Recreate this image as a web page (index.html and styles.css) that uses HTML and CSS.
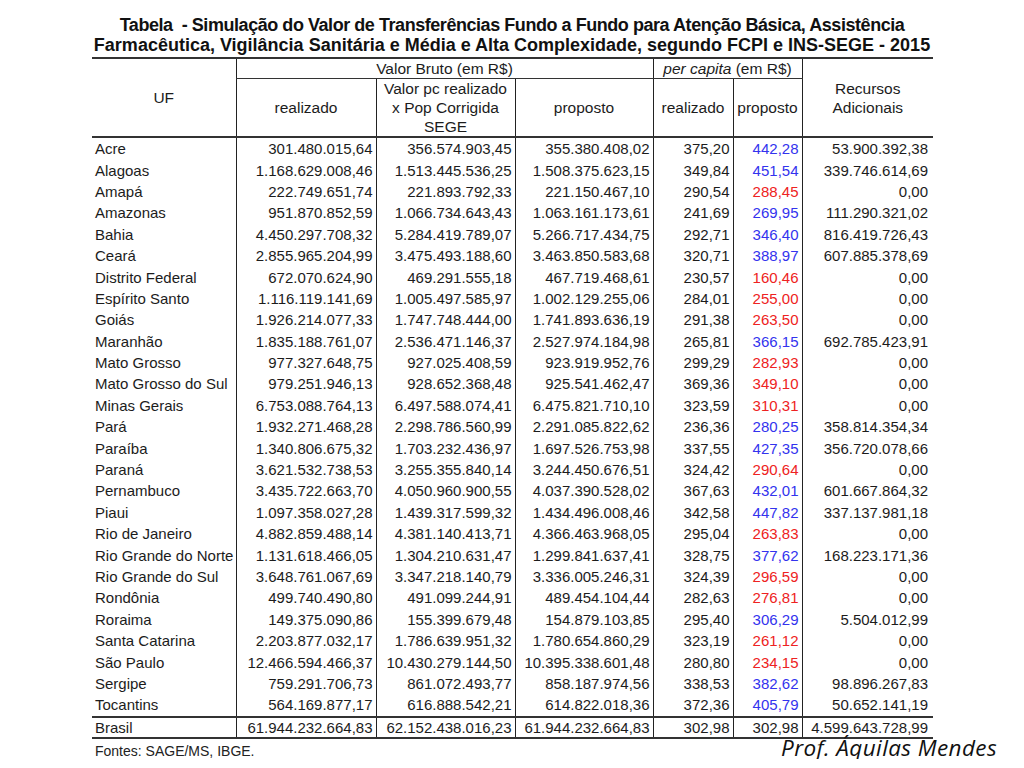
FILE: index.html
```html
<!DOCTYPE html>
<html lang="pt-BR">
<head>
<meta charset="utf-8">
<title>Tabela - Simulação do Valor de Transferências Fundo a Fundo</title>
<link rel="stylesheet" href="styles.css">
</head>
<body>
<h1 class="title"><span class="l1">Tabela&nbsp; - Simulação do Valor de Transferências Fundo a Fundo para Atenção Básica, Assistência</span><br>Farmacêutica, Vigilância Sanitária e Média e Alta Complexidade, segundo FCPI e INS-SEGE - 2015</h1>
<table class="sim">
  <colgroup>
    <col class="c-uf"><col class="c-real"><col class="c-pc"><col class="c-prop"><col class="c-pcr"><col class="c-pcp"><col class="c-rec">
  </colgroup>
  <thead>
    <tr class="h1">
      <th rowspan="2" class="hb">UF</th>
      <th colspan="3" class="grp vl">Valor Bruto (em R$)</th>
      <th colspan="2" class="grp vl"><i>per capita</i> (em R$)</th>
      <th rowspan="2" class="hb vl">Recursos<br>Adicionais</th>
    </tr>
    <tr class="h2">
      <th class="hb vl">realizado</th>
      <th class="hb vl">Valor pc realizado<br>x Pop Corrigida<br>SEGE</th>
      <th class="hb vl">proposto</th>
      <th class="hb vl">realizado</th>
      <th class="hb vl">proposto</th>
    </tr>
  </thead>
  <tbody>
    <tr><td>Acre</td><td>301.480.015,64</td><td>356.574.903,45</td><td>355.380.408,02</td><td>375,20</td><td class="up">442,28</td><td>53.900.392,38</td></tr>
    <tr><td>Alagoas</td><td>1.168.629.008,46</td><td>1.513.445.536,25</td><td>1.508.375.623,15</td><td>349,84</td><td class="up">451,54</td><td>339.746.614,69</td></tr>
    <tr><td>Amapá</td><td>222.749.651,74</td><td>221.893.792,33</td><td>221.150.467,10</td><td>290,54</td><td class="dn">288,45</td><td>0,00</td></tr>
    <tr><td>Amazonas</td><td>951.870.852,59</td><td>1.066.734.643,43</td><td>1.063.161.173,61</td><td>241,69</td><td class="up">269,95</td><td>111.290.321,02</td></tr>
    <tr><td>Bahia</td><td>4.450.297.708,32</td><td>5.284.419.789,07</td><td>5.266.717.434,75</td><td>292,71</td><td class="up">346,40</td><td>816.419.726,43</td></tr>
    <tr><td>Ceará</td><td>2.855.965.204,99</td><td>3.475.493.188,60</td><td>3.463.850.583,68</td><td>320,71</td><td class="up">388,97</td><td>607.885.378,69</td></tr>
    <tr><td>Distrito Federal</td><td>672.070.624,90</td><td>469.291.555,18</td><td>467.719.468,61</td><td>230,57</td><td class="dn">160,46</td><td>0,00</td></tr>
    <tr><td>Espírito Santo</td><td>1.116.119.141,69</td><td>1.005.497.585,97</td><td>1.002.129.255,06</td><td>284,01</td><td class="dn">255,00</td><td>0,00</td></tr>
    <tr><td>Goiás</td><td>1.926.214.077,33</td><td>1.747.748.444,00</td><td>1.741.893.636,19</td><td>291,38</td><td class="dn">263,50</td><td>0,00</td></tr>
    <tr><td>Maranhão</td><td>1.835.188.761,07</td><td>2.536.471.146,37</td><td>2.527.974.184,98</td><td>265,81</td><td class="up">366,15</td><td>692.785.423,91</td></tr>
    <tr><td>Mato Grosso</td><td>977.327.648,75</td><td>927.025.408,59</td><td>923.919.952,76</td><td>299,29</td><td class="dn">282,93</td><td>0,00</td></tr>
    <tr><td>Mato Grosso do Sul</td><td>979.251.946,13</td><td>928.652.368,48</td><td>925.541.462,47</td><td>369,36</td><td class="dn">349,10</td><td>0,00</td></tr>
    <tr><td>Minas Gerais</td><td>6.753.088.764,13</td><td>6.497.588.074,41</td><td>6.475.821.710,10</td><td>323,59</td><td class="dn">310,31</td><td>0,00</td></tr>
    <tr><td>Pará</td><td>1.932.271.468,28</td><td>2.298.786.560,99</td><td>2.291.085.822,62</td><td>236,36</td><td class="up">280,25</td><td>358.814.354,34</td></tr>
    <tr><td>Paraíba</td><td>1.340.806.675,32</td><td>1.703.232.436,97</td><td>1.697.526.753,98</td><td>337,55</td><td class="up">427,35</td><td>356.720.078,66</td></tr>
    <tr><td>Paraná</td><td>3.621.532.738,53</td><td>3.255.355.840,14</td><td>3.244.450.676,51</td><td>324,42</td><td class="dn">290,64</td><td>0,00</td></tr>
    <tr><td>Pernambuco</td><td>3.435.722.663,70</td><td>4.050.960.900,55</td><td>4.037.390.528,02</td><td>367,63</td><td class="up">432,01</td><td>601.667.864,32</td></tr>
    <tr><td>Piaui</td><td>1.097.358.027,28</td><td>1.439.317.599,32</td><td>1.434.496.008,46</td><td>342,58</td><td class="up">447,82</td><td>337.137.981,18</td></tr>
    <tr><td>Rio de Janeiro</td><td>4.882.859.488,14</td><td>4.381.140.413,71</td><td>4.366.463.968,05</td><td>295,04</td><td class="dn">263,83</td><td>0,00</td></tr>
    <tr><td>Rio Grande do Norte</td><td>1.131.618.466,05</td><td>1.304.210.631,47</td><td>1.299.841.637,41</td><td>328,75</td><td class="up">377,62</td><td>168.223.171,36</td></tr>
    <tr><td>Rio Grande do Sul</td><td>3.648.761.067,69</td><td>3.347.218.140,79</td><td>3.336.005.246,31</td><td>324,39</td><td class="dn">296,59</td><td>0,00</td></tr>
    <tr><td>Rondônia</td><td>499.740.490,80</td><td>491.099.244,91</td><td>489.454.104,44</td><td>282,63</td><td class="dn">276,81</td><td>0,00</td></tr>
    <tr><td>Roraima</td><td>149.375.090,86</td><td>155.399.679,48</td><td>154.879.103,85</td><td>295,40</td><td class="up">306,29</td><td>5.504.012,99</td></tr>
    <tr><td>Santa Catarina</td><td>2.203.877.032,17</td><td>1.786.639.951,32</td><td>1.780.654.860,29</td><td>323,19</td><td class="dn">261,12</td><td>0,00</td></tr>
    <tr><td>São Paulo</td><td>12.466.594.466,37</td><td>10.430.279.144,50</td><td>10.395.338.601,48</td><td>280,80</td><td class="dn">234,15</td><td>0,00</td></tr>
    <tr><td>Sergipe</td><td>759.291.706,73</td><td>861.072.493,77</td><td>858.187.974,56</td><td>338,53</td><td class="up">382,62</td><td>98.896.267,83</td></tr>
    <tr><td>Tocantins</td><td>564.169.877,17</td><td>616.888.542,21</td><td>614.822.018,36</td><td>372,36</td><td class="up">405,79</td><td>50.652.141,19</td></tr>
  </tbody>
  <tfoot>
    <tr class="total"><td>Brasil</td><td>61.944.232.664,83</td><td>62.152.438.016,23</td><td>61.944.232.664,83</td><td>302,98</td><td>302,98</td><td>4.599.643.728,99</td></tr>
  </tfoot>
</table>
<div class="foot">
  <span class="src">Fontes: SAGE/MS, IBGE.</span>
  <span class="author">Prof. Áquilas Mendes</span>
</div>
</body>
</html>
```

FILE: styles.css
```css
html, body {
  margin: 0;
  padding: 0;
  background: #ffffff;
}

body {
  font-family: "Liberation Sans", Arial, sans-serif;
  color: #1c1c1c;
  width: 1024px;
}

.title {
  margin: 0 0 2px 0;
  padding-top: 15px;
  font-size: 18px;
  line-height: 20px;
  font-weight: 700;
  text-align: center;
  color: #111111;
}

.title .l1 {
  letter-spacing: -0.45px;
}

.sim {
  width: 841px;
  margin: 0 0 0 92px;
  border-collapse: collapse;
  table-layout: fixed;
  font-size: 15px;
  border-top: 2px solid #333333;
}

.c-uf { width: 144px; }
.c-real { width: 140px; }
.c-pc { width: 139px; }
.c-prop { width: 138px; }
.c-pcr { width: 80px; }
.c-pcp { width: 69px; }
.c-rec { width: 131px; }

.sim th {
  font-weight: 400;
  font-size: 15.5px;
  line-height: 19px;
  padding: 0;
  text-align: center;
  vertical-align: middle;
  white-space: nowrap;
}

.sim .h1 th { height: 19px; }
.sim .h2 th { height: 57px; }

.sim th.grp { border-bottom: 1px solid #333333; }
.sim th.hb { border-bottom: 2px solid #333333; }
.sim .vl { border-left: 1px solid #222222; }

.sim td {
  height: 21.4px;
  padding: 0 3px 0 0;
  line-height: 17px;
  text-align: right;
  vertical-align: middle;
  white-space: nowrap;
  overflow: hidden;
  border-left: 1px solid #222222;
}

.sim td:first-child {
  text-align: left;
  padding: 0 0 0 3px;
  border-left: none;
  text-overflow: clip;
}

.sim td:last-child { padding-right: 5px; }

.sim .up { color: #3333ee; }
.sim .dn { color: #ee2222; }

.sim .total td {
  height: 19px;
  border-top: 2px solid #333333;
  border-bottom: 2px solid #333333;
}

.foot {
  display: flex;
  justify-content: space-between;
  align-items: baseline;
  padding: 0 27px 0 95px;
}

.src {
  font-size: 14px;
  color: #222222;
}

.author {
  font-family: "Open Sans", "Liberation Sans", sans-serif;
  font-style: italic;
  font-size: 22.5px;
  line-height: 17px;
  letter-spacing: 0.4px;
  color: #111111;
}
```
